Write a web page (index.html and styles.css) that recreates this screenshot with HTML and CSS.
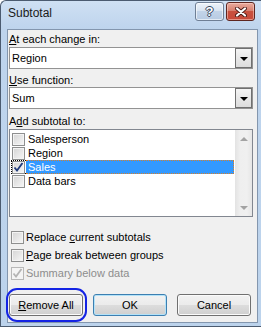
FILE: index.html
```html
<!DOCTYPE html>
<html lang="en">

<head>
    <meta charset="UTF-8">
    <meta name="viewport" content="width=device-width, initial-scale=1.0">
    <title>Subtotal</title>
    <link rel="stylesheet" href="styles.css">
</head>

<body>

    <div class="window">
        <div class="titleBar">
            <span class="title">Subtotal</span>
            <div class="captionButtons">
                <div class="capButton helpButton"><span>?</span></div>
                <div class="capButton closeButton">
                    <svg width="12" height="10" viewBox="0 0 12 10">
                        <path d="M2 1.5 L10 8.5 M10 1.5 L2 8.5" stroke="#4a1a16" stroke-width="4" stroke-linecap="round" />
                        <path d="M2 1.5 L10 8.5 M10 1.5 L2 8.5" stroke="#ffffff" stroke-width="2.2" stroke-linecap="round" />
                    </svg>
                </div>
            </div>
        </div>

        <div class="client">
            <div class="fieldLabel"><u>A</u>t each change in:</div>
            <div class="combo">
                <span class="comboText">Region</span>
                <span class="comboButton"><span class="comboArrow"></span></span>
            </div>

            <div class="fieldLabel second"><u>U</u>se function:</div>
            <div class="combo">
                <span class="comboText">Sum</span>
                <span class="comboButton"><span class="comboArrow"></span></span>
            </div>

            <div class="fieldLabel third">A<u>d</u>d subtotal to:</div>
            <div class="listBox">
                <div class="listItems">
                    <div class="listRow">
                        <span class="checkCell"><span class="checkBox"></span></span>
                        <span class="itemText">Salesperson</span>
                    </div>
                    <div class="listRow">
                        <span class="checkCell"><span class="checkBox"></span></span>
                        <span class="itemText">Region</span>
                    </div>
                    <div class="listRow selected">
                        <span class="checkCell">
                            <span class="checkBox">
                                <svg width="11" height="11" viewBox="0 0 11 11">
                                    <path d="M1.5 5.5 L4 8.5 L9.5 1" fill="none" stroke="#1f3a7a" stroke-width="1.8" />
                                </svg>
                            </span>
                        </span>
                        <span class="itemText">Sales</span>
                    </div>
                    <div class="listRow">
                        <span class="checkCell"><span class="checkBox"></span></span>
                        <span class="itemText">Data bars</span>
                    </div>
                </div>
                <div class="scrollBar">
                    <span class="scrollButton"><span class="arrowUp"></span></span>
                    <span class="scrollButton"><span class="arrowDown"></span></span>
                </div>
            </div>

            <div class="options">
                <div class="option">
                    <span class="checkBox"></span>
                    <span>Replace <u>c</u>urrent subtotals</span>
                </div>
                <div class="option">
                    <span class="checkBox"></span>
                    <span><u>P</u>age break between groups</span>
                </div>
                <div class="option disabled">
                    <span class="checkBox">
                        <svg width="11" height="11" viewBox="0 0 11 11">
                            <path d="M1.5 5.5 L4 8.5 L9.5 1" fill="none" stroke="#b4b4b4" stroke-width="1.8" />
                        </svg>
                    </span>
                    <span>Summary below data</span>
                </div>
            </div>

            <div class="buttonRow">
                <div class="focusWrap">
                    <button class="dlgButton"><u>R</u>emove All</button>
                    <span class="focusRing"></span>
                </div>
                <button class="dlgButton default">OK</button>
                <button class="dlgButton">Cancel</button>
            </div>
        </div>
    </div>

</body>

</html>
```

FILE: styles.css
```css
body {
    margin: 0;
    overflow: hidden;
    background-color: #ffffff;
    font-family: "Liberation Sans", Arial, sans-serif;
    font-size: 11px;
    color: #000000;
}

.window {
    width: 261px;
    height: 327px;
    box-sizing: border-box;
    border: 1px solid #4b5b70;
    border-right: none;
    border-radius: 6px 0 0 0;
    padding: 0 3px 3px 6px;
    background: linear-gradient(to bottom, #cfe0f3 0px, #bed4ed 28px, #bcd3ec 100%);
    display: flex;
    flex-direction: column;
}

/* title bar */

.titleBar {
    height: 28px;
    display: flex;
    align-items: flex-start;
}

.title {
    margin-top: 4px;
    padding-left: 1px;
    font-size: 12px;
    line-height: 16px;
    color: #1a1a1a;
}

.captionButtons {
    margin-left: auto;
    margin-top: 1px;
    margin-right: 3px;
    display: flex;
    gap: 2px;
}

.capButton {
    width: 29px;
    height: 19px;
    box-sizing: border-box;
    border-radius: 3px;
    display: flex;
    align-items: center;
    justify-content: center;
}

.helpButton {
    border: 1px solid #6f7f95;
    background: linear-gradient(to bottom, #eef3fa 0%, #d9e4f1 45%, #c2d3e8 50%, #b8cbe3 100%);
    box-shadow: inset 0 0 0 1px rgba(255, 255, 255, 0.6);
}

.helpButton span {
    font-size: 13px;
    font-weight: bold;
    line-height: 13px;
    color: #ffffff;
    text-shadow: 1px 0 0 #34445c, -1px 0 0 #34445c, 0 1px 0 #34445c, 0 -1px 0 #34445c;
}

.closeButton {
    border: 1px solid #5e2620;
    background: linear-gradient(to bottom, #e9ab9e 0%, #d8806f 45%, #c8503e 50%, #c84a3a 100%);
    box-shadow: inset 0 0 0 1px rgba(255, 220, 210, 0.5);
}

/* dialog body */

.client {
    flex: 1;
    border: 1px solid #8396ae;
    background-color: #f0f0f0;
    padding: 3px 4px 0 1px;
    display: flex;
    flex-direction: column;
}

.fieldLabel {
    line-height: 13px;
    padding-left: 0;
}

.fieldLabel.second {
    margin-top: 5px;
}

.fieldLabel.third {
    margin-top: 6px;
}

.combo {
    margin-top: 1px;
    height: 22px;
    box-sizing: border-box;
    border: 1px solid #939393;
    background-color: #ffffff;
    display: flex;
    align-items: center;
}

.fieldLabel.second + .combo {
    margin-top: 0;
}

.comboText {
    flex: 1;
    padding-left: 2px;
    line-height: 14px;
}

.comboButton {
    width: 17px;
    height: 100%;
    box-sizing: border-box;
    border: 1px solid #707070;
    background: linear-gradient(to bottom, #f4f4f4, #dcdcdc);
    display: flex;
    align-items: center;
    justify-content: center;
}

.comboArrow {
    width: 0;
    height: 0;
    border-left: 4px solid transparent;
    border-right: 4px solid transparent;
    border-top: 4px solid #000000;
    margin-top: 1px;
}

/* list box */

.listBox {
    margin-top: 1px;
    height: 88px;
    box-sizing: border-box;
    border: 1px solid #828790;
    background-color: #ffffff;
    display: flex;
}

.listItems {
    flex: 1;
    padding: 2px 1px 0 1px;
}

.listRow {
    height: 14px;
    display: flex;
}

.checkCell {
    width: 15px;
    box-sizing: border-box;
    display: flex;
    align-items: center;
    padding-left: 1px;
}

.itemText {
    flex: 1;
    box-sizing: border-box;
    padding-left: 2px;
    line-height: 14px;
}

.listRow.selected .checkCell {
    border: 1px dotted #000000;
    border-right: none;
    padding-left: 0;
}

.listRow.selected .itemText {
    background-color: #3399ff;
    color: #ffffff;
    border: 1px dotted #d8802a;
    border-left: none;
    line-height: 12px;
}

.scrollBar {
    width: 17px;
    background: linear-gradient(to right, #e3e3e3, #efefef 30%, #f0f0f0 70%, #e6e6e6);
    display: flex;
    flex-direction: column;
    justify-content: space-between;
}

.scrollButton {
    height: 17px;
    display: flex;
    align-items: center;
    justify-content: center;
}

.arrowUp {
    width: 0;
    height: 0;
    border-left: 4px solid transparent;
    border-right: 4px solid transparent;
    border-bottom: 4px solid #a3a3a3;
}

.arrowDown {
    width: 0;
    height: 0;
    border-left: 4px solid transparent;
    border-right: 4px solid transparent;
    border-top: 4px solid #a3a3a3;
}

/* check boxes */

.checkBox {
    width: 13px;
    height: 13px;
    box-sizing: border-box;
    border: 1px solid #8e8f8f;
    background: linear-gradient(135deg, #d4d4d4, #f7f7f7);
    box-shadow: inset 0 0 0 1px #f4f4f4;
    display: flex;
    align-items: center;
    justify-content: center;
    flex-shrink: 0;
}

.options {
    margin-top: 14px;
    padding-left: 2px;
    display: flex;
    flex-direction: column;
    gap: 5px;
}

.option {
    height: 13px;
    display: flex;
    align-items: center;
    gap: 2px;
    line-height: 13px;
}

.option.disabled {
    color: #8d8d8d;
}

.option.disabled .checkBox {
    border-color: #b8b8b8;
    background: #f4f4f4;
}

/* buttons */

.buttonRow {
    margin-top: 14px;
    display: flex;
    gap: 10px;
}

.focusWrap {
    position: relative;
    display: flex;
}

.dlgButton {
    width: 74px;
    height: 22px;
    box-sizing: border-box;
    border: 1px solid #707070;
    border-radius: 3px;
    background: linear-gradient(to bottom, #f2f2f2 0%, #ebebeb 50%, #dddddd 50%, #cfcfcf 100%);
    box-shadow: inset 0 0 0 1px #fbfbfb;
    font-family: "Liberation Sans", Arial, sans-serif;
    font-size: 11px;
    color: #000000;
    padding: 0;
}

.dlgButton.default {
    border-color: #3c7fb1;
    box-shadow: inset 0 0 0 1px #b3e2f8;
}

.focusRing {
    position: absolute;
    left: -3px;
    top: -6px;
    width: 81px;
    height: 34px;
    box-sizing: border-box;
    border: 2px solid #1424e4;
    border-radius: 11px;
}
```
